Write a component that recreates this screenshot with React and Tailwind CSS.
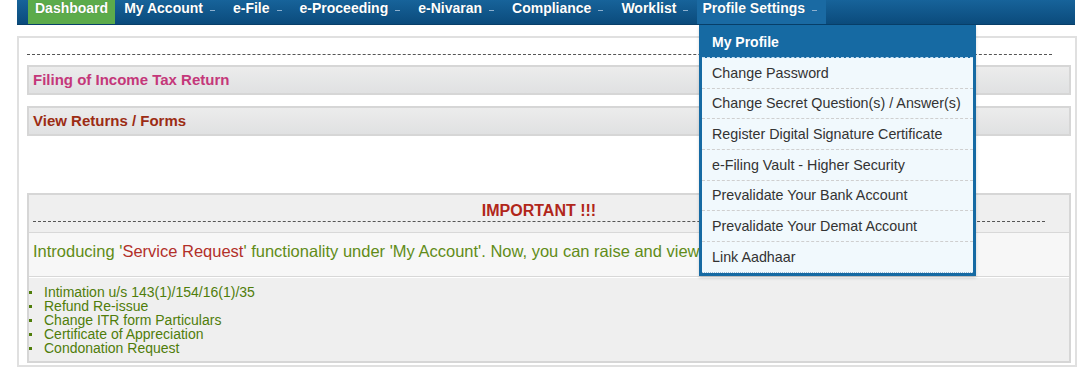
import React from "react";

const navItems = ["My Account", "e-File", "e-Proceeding", "e-Nivaran", "Compliance", "Worklist"];
const menu = [
  "Change Password",
  "Change Secret Question(s) / Answer(s)",
  "Register Digital Signature Certificate",
  "e-Filing Vault - Higher Security",
  "Prevalidate Your Bank Account",
  "Prevalidate Your Demat Account",
  "Link Aadhaar",
];
const list = [
  "Intimation u/s 143(1)/154/16(1)/35",
  "Refund Re-issue",
  "Change ITR form Particulars",
  "Certificate of Appreciation",
  "Condonation Request",
];

function Caret() {
  return <span className="ml-[7px] mt-[9px] inline-block w-[5px] h-px bg-[#8db0cf]" />;
}

const navText = "flex items-start pt-[1px] leading-[14px] text-white font-bold text-[14px] [text-shadow:0_0_1px_rgba(0,0,0,0.3)]";

export default function App() {
  return (
    <div
      className="relative w-[1092px] h-[377px] bg-white overflow-hidden"
      style={{ fontFamily: '"Liberation Sans", Arial, sans-serif' }}
    >
      {/* Nav */}
      <div className="ml-[17px] w-[1058px] h-[25px] flex items-stretch pl-[11px] bg-gradient-to-b from-[#17639a] to-[#0b4b7c] border-b border-[#083f69]">
        <div className={navText + " px-[7px] bg-[#5cab4b]"}>Dashboard</div>
        {navItems.map((t) => (
          <div key={t} className={navText + " px-[9px]"}>
            {t}
            <Caret />
          </div>
        ))}
        <div className={navText + " pl-[5px] pr-[7px] w-[129px] bg-[#1a6aa3]"}>
          Profile Settings
          <Caret />
        </div>
      </div>

      {/* Main panel */}
      <div className="mt-[11px] ml-[17px] w-[1060px] h-[331px] border-2 border-[#e0e0e0] pl-[8px] pr-[4px] pt-[16px]">
        <div className="w-[1025px] border-t border-dashed border-[#555]" />
        <div className="mt-[10px] h-[30px] flex items-center pl-[4px] border-2 border-[#d6d6d6] bg-gradient-to-b from-[#ececec] to-[#e0e1e2] text-[15px] font-bold text-[#c4377a]">
          Filing of Income Tax Return
        </div>
        <div className="mt-[11px] h-[30px] flex items-center pl-[4px] border-2 border-[#d6d6d6] bg-gradient-to-b from-[#ececec] to-[#e0e1e2] text-[15px] font-bold text-[#9c2c14]">
          View Returns / Forms
        </div>

        <div className="mt-[57px] h-[170px] border-2 border-[#d6d6d6] bg-[#efefef] flex flex-col">
          <div className="pl-[4px] pr-[24px]">
            <div className="h-[27px] flex items-end justify-center pb-[1px] leading-[18px] border-b border-dashed border-[#555] text-[16px] font-bold text-[#b1261a]">
              IMPORTANT !!!
            </div>
          </div>
          <div className="mt-[10px] h-[45px] border-y border-[#d8d8d8] bg-[#f7f7f7] pl-[4px] pt-[6px]">
            <div className="w-[666px] overflow-hidden whitespace-nowrap text-[16.5px] text-[#618c18]">
              Introducing '<span className="text-[#b2302a]">Service Request</span>' functionality under 'My Account'. Now, you can raise and view
            </div>
          </div>
          <div className="border-t border-white flex-1 pt-[7px]">
            <ul>
              {list.map((l) => (
                <li key={l} className="relative text-[14px] leading-[14px] text-[#4f7d0a] pl-[15px]">
                  <span className="absolute left-0 top-[6px] w-[3px] h-[3px] bg-[#4f7d0a]" />
                  {l}
                </li>
              ))}
            </ul>
          </div>
        </div>
      </div>

      {/* Dropdown */}
      <div className="absolute left-[699px] top-[25px] w-[277px] bg-[#166aa3] px-[3px] pb-[3px] shadow-[0_2px_3px_rgba(0,0,0,0.15)]">
        <div className="h-[33px] flex items-center pl-[10px] pt-[2px] text-white font-bold text-[14px] border-b border-dashed border-[#c9def0]">
          My Profile
        </div>
        <div className="bg-[#f1f9fd]">
          {menu.map((m, i) => (
            <div
              key={m}
              className={
                "h-[30.7px] flex items-center pl-[10px] pt-[1px] text-[14.3px] text-[#333] " +
                (i < menu.length - 1 ? "border-b border-dashed border-[#cfcfcf]" : "border-b border-dotted border-[#9fb9d2]")
              }
            >
              {m}
            </div>
          ))}
        </div>
      </div>
    </div>
  );
}
